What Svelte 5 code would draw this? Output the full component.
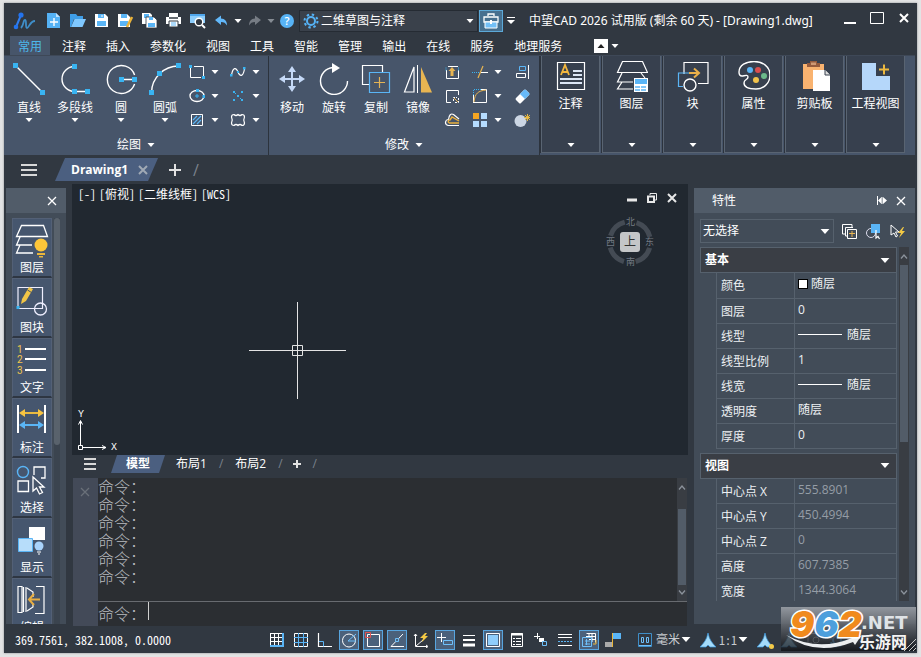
<script>
  const icons = {
    logo: '<path d="M3 16 8 4" stroke="#2f7df0" stroke-width="2"/><circle cx="8" cy="4" r="2.6" fill="#2373ee"/><circle cx="3" cy="16" r="2.3" fill="#2373ee"/><path d="M8 17C11 14 10 9 12 9S12 17 14 17 17 10 22 10" fill="none" stroke="#3f8ec8" stroke-width="1.8"/>',
    new: '<path d="M2 1h9l4 4v11H2z" fill="#55b2f5"/><path d="M11 1v4h4z" fill="#bfe3ff"/><path d="M5 10h8M9 6v8" stroke="#fff" stroke-width="1.4"/>',
    open: '<path d="M1 15V2h6l1.500 2H14v3H5L2 15z" fill="#3f9ee8"/><path d="M5.500 7H17l-3.500 8H2z" fill="#7fc8ff"/>',
    save: '<path d="M2 2h10l3 3v10H2z" fill="#fff"/><path d="M5 2h6v4H5zM4 9h9v5H4z" fill="#5ab5f6"/><path d="M9 3v2" stroke="#fff"/>',
    saveas: '<path d="M1 2h9l3 3v10H1z" fill="#fff"/><path d="M4 2h6v4H4zM3 9h8v5H3z" fill="#5ab5f6"/><path d="m15 5-5 10" stroke="#e8b23a" stroke-width="2.600"/>',
    saveall: '<path d="M1 1h8l2 2v9H1z" fill="#fff"/><path d="M3 2h5v4H3z" fill="#5ab5f6"/><path d="M5 5h8l3 3v8H5z" fill="#fff" stroke="#313841" stroke-width=".8"/><path d="M8 5h4v3H8zM7 11h7v4H7z" fill="#5ab5f6"/>',
    print: '<path d="M4 1h9v4H4z" fill="#fff"/><path d="M1 5h15v7H1z" fill="#fff"/><path d="M4 6h9" stroke="#313841" stroke-width="1.500"/><path d="M4 9h9v6H4z" fill="#fff" stroke="#313841"/><path d="M6 11h5M6 13h5" stroke="#5ab5f6"/>',
    preview: '<path d="M1 2h15v9H1z" fill="#8ccdfc"/><path d="M1 2h15v2H1z" fill="#4fa6ec"/><circle cx="10" cy="10" r="3.800" fill="#313841" stroke="#fff" stroke-width="1.400"/><path d="m13 13 3 3" stroke="#fff" stroke-width="2"/>',
    undo: '<path d="M2 8 8 3.500v3c4 0 6 3 6 7-1.500-2.500-3-3.500-6-3.500V13z" fill="#62b8fa"/>',
    redo: '<path d="M15 8 9 3.500v3c-4 0-6 3-6 7 1.500-2.500 3-3.500 6-3.500V13z" fill="#767c84"/>',
    gear: '<circle cx="8" cy="8" r="4" fill="none" stroke="#55b2f5" stroke-width="2"/><circle cx="8" cy="8" r="6.500" fill="none" stroke="#55b2f5" stroke-width="2" stroke-dasharray="2.400 2.700"/>',
    toolbox: '<path d="M6 4V2h6v2M2 5h14v5H2z" fill="none" stroke="#fff" stroke-width="1.300"/><path d="M3 10h12v6H3z" fill="#73c0f7" stroke="#fff"/><path d="M9 8v4" stroke="#fff" stroke-width="2"/>',
    line: '<path d="m3 3 27 27" stroke="#fff" stroke-width="1.400"/><path d="M0 0h5v5H0zM27 27h5v5h-5z" fill="#39b4f2"/>',
    pline: '<path d="M15.500 3.500a12.500 12.500 0 0 0 0 25h13" fill="none" stroke="#fff" stroke-width="1.400"/><path d="M13 1h5v5h-5zM13 26h5v5h-5zM26 26h5v5h-5z" fill="#39b4f2"/>',
    circle: '<path d="M29.600 12a14 14 0 1 0 0 9M16.500 16.500h13" fill="none" stroke="#fff" stroke-width="1.400"/><path d="M14 14h5v5h-5zM27 14h5v5h-5z" fill="#39b4f2"/>',
    arc: '<path d="M2.500 29.500A27 27 0 0 1 29.500 3" fill="none" stroke="#fff" stroke-width="1.400"/><path d="M0 27h5v5H0zM8 8h5v5H8zM27 0h5v5h-5z" fill="#39b4f2"/>',
    rect: '<path d="M1.500 4v9.500H12M5 2.500h9.500V12" fill="none" stroke="#fff"/><path d="M0 1h3v3H0zM13 12h3v3h-3z" fill="#39b4f2"/>',
    ellipse: '<ellipse cx="8" cy="8" rx="7" ry="5.500" fill="none" stroke="#fff" stroke-width="1.300"/><path d="M7 1h3v3H7zM13.500 7h2.500v3h-2.500zM7.500 6h1v1.500H10v1H8.500V10h-1V8.500H6v-1h1.500z" fill="#39b4f2"/>',
    hatch: '<path d="M2.500 2.500h11v11h-11z" fill="none" stroke="#fff"/><path d="m4 8 4-4M4 12l8-8M8 12l4-4" stroke="#5ab5f6" stroke-width="1.200"/>',
    spline: '<path d="M1.500 11C3 3 6 3 8 8s5 5 6.500-3" fill="none" stroke="#fff" stroke-width="1.200"/><path d="M0 10h2.500v2.500H0zM7 7h2v2H7zM13 3h2.500v2.500H13z" fill="#39b4f2"/>',
    points: '<path d="M3 3h2v2H3zM11 3h2v2h-2zM7 7h2v2H7zM3 11h2v2H3zM11 11h2v2h-2zM5 5h1v1H5zM10 10h1v1h-1z" fill="#39b4f2"/>',
    cloud: '<path d="M4 2.500q2 2 4 0 2 2 4 0 2.500 0 2.500 2.500-1.500 3 0 6 0 2.500-2.500 2.500-2-2-4 0-2-2-4 0-2.500 0-2.500-2.500 1.500-3 0-6 0-2.500 2.500-2.500z" fill="none" stroke="#fff" stroke-width="1.200"/>',
    move: '<path d="M16 6v20M6 16h20" stroke="#c5d9f7" stroke-width="2"/><path d="m16 3 4 6h-8zM16 29l4-6h-8zM3 16l6-4v8zM29 16l-6-4v8z" fill="#c5d9f7"/>',
    rotate: '<path d="M29.500 18A13.500 13.500 0 1 1 15 4.500" fill="none" stroke="#fff" stroke-width="1.400"/><path d="m14 0 8 5-8 5z" fill="#fff"/>',
    copy: '<path d="M9 21.500H2.500v-19h20V9" fill="none" stroke="#fff" stroke-width="1.200"/><path d="M9.500 9.500h20v20h-20z" fill="none" stroke="#5ab5f6" stroke-width="1.200"/><path d="M14 19.500h11M19.500 14v11" stroke="#e5b354" stroke-width="1.200"/>',
    mirror: '<path d="M2.500 29h9.500V4z" fill="none" stroke="#fff" stroke-width="1.200"/><path d="M15.500 2v28" stroke="#fff"/><path d="M19 4v25.500h11z" fill="#e8b552"/>',
    stretch: '<path d="M4 2.500h10M2.500 6v8.500h12V6" fill="none" stroke="#fff"/><path d="M2 3.500v3M14.500 3.500v3" stroke="#39b4f2" stroke-dasharray="1 1"/><path d="m8 3 3.500 4H9.500v5h-3V7h-2z" fill="#e8b552"/>',
    scale: '<path d="M7 14.500H2.500v-12h12V7" fill="none" stroke="#fff"/><path d="M9.500 13V9.500H13M14.500 10v4.500H10" fill="none" stroke="#fff" stroke-dasharray="2 1"/><path d="m10 10 4 4" stroke="#e8b552"/>',
    offset: '<path d="M15 13.500H4.500a3 3 0 0 1 0-6C5 3 7 1 9.500 2.500L15 7" fill="none" stroke="#fff" stroke-width="1.200"/><path d="M15 11H5.500a1 1 0 0 1 .5-3l2-3 7 4" fill="none" stroke="#eab13f" stroke-width="1.400"/>',
    trim: '<path d="M0 8.500h8" stroke="#39b4f2" stroke-dasharray="1 1"/><path d="M9 8.500h7" stroke="#fff"/><path d="m11 2-5 12" stroke="#e8b552" stroke-width="1.200"/>',
    fillet: '<path d="M1.500 15V7M9 1.500h5.500v13H1.500" fill="none" stroke="#fff"/><path d="M1.500 7V1.500H9" fill="none" stroke="#39b4f2" stroke-dasharray="1 1"/><path d="M2 14C3 5 6 3 14 2" fill="none" stroke="#e8b552"/>',
    array: '<path d="M1 1h6v6H1z" fill="#f5a623"/><path d="M9 1h6v6H9zM1 9h6v6H1zM9 9h6v6H9z" fill="#b5dcff"/>',
    align: '<path d="M14.500 1v14" stroke="#fff"/><path d="M5.500 2.500h6v4h-6z" fill="none" stroke="#5ab5f6"/><path d="M2.500 9.500h9v4h-9z" fill="none" stroke="#fff"/>',
    erase: '<path d="m2 10 8-8q1-1 2 0l3 3q1 1 0 2l-8 8q-1 1-2 0l-3-3q-1-1 0-2z" fill="#fff"/><path d="m6 6 4-4q1-1 2 0l3 3q1 1 0 2l-4 4z" fill="#67b9f8"/>',
    explode: '<circle cx="6.500" cy="9" r="6" fill="#ccd6e4"/><path d="M13.500 2v7M10 5.500h7M11 3l5 5M16 3l-5 5" stroke="#e8b83e"/>',
    note: '<path d="M2.500 1.500h27v27h-27z" fill="none" stroke="#fff" stroke-width="1.200"/><path d="m6 14 4-10 4 10M7.500 11h5" fill="none" stroke="#f3b73e" stroke-width="1.800"/><path d="M18 10h9M18 14h9M5 18h22M5 22h22" stroke="#dce6f5" stroke-width="1.800"/>',
    layers: '<path d="M6.500.5h20l5 11H1.500zM6 12l-4.500 9H17M6 21l-4.500 7H17M25 12l4 5" fill="none" stroke="#fff" stroke-width="1.200"/><path d="M18 17h14v14H18z" fill="#fff"/><path d="M19 18h12v5H19z" fill="#5ab5f6"/><path d="M19 26h12M19 29h12" stroke="#5ab5f6" stroke-width="1.500" stroke-dasharray="5 1"/>',
    block: '<path d="M7 8V1.500h24v21H21M7 13v-5" fill="none" stroke="#fff" stroke-width="1.200"/><path d="M14 12H1.500v13.500H6" fill="none" stroke="#5ab5f6" stroke-width="1.200"/><circle cx="13" cy="24" r="6" fill="#37404e" stroke="#fff" stroke-width="1.400"/><path d="M12 12h9M17 7.500l5 4.500-5 4.500" fill="none" stroke="#e9b04a" stroke-width="2"/>',
    palette: '<path d="M1 11C1 4 8 .5 16 .5S32 5 32 14 25 28 18 28 6 26 6 22s4-3 4-6-4-1-6-1-3-2-3-4z" fill="none" stroke="#fff" stroke-width="1.400"/><circle cx="12" cy="9" r="3" fill="#5ab5f6"/><circle cx="20" cy="9" r="3" fill="#db4e4e"/><circle cx="26" cy="15" r="3" fill="#6bb98a"/><circle cx="18" cy="19" r="3" fill="#f2c34c"/>',
    clipboard: '<path d="M4 3h21v25H4z" fill="#f9b370"/><path d="M8 2h3V0h7v2h3v4H8z" fill="#955b3d"/><path d="M12 1.500h5V4h-5z" fill="#cf9974"/><path d="M14 9h12l5 5v16H14z" fill="#fff"/><path d="M26 9v5h5" fill="#ddd" stroke="#37404e"/>',
    views: '<path d="M2 2h14v13h14v14H2z" fill="#b5d7fa"/><path d="M19 8.500h10M24 3.500v10" stroke="#edb93f" stroke-width="2"/>',
    lLayer: '<path d="M6.500 1.500h22l4 11h-31zM5 13l-3.500 8H17M5 21l-3.500 8H18" fill="none" stroke="#fff" stroke-width="1.300"/><circle cx="26" cy="21" r="6.500" fill="#fdc639"/><path d="M22 29h8v2h-8zM24 32h4v1.500h-4z" fill="#e9b63b"/>',
    lBlock: '<path d="M3 3.500h24.500v21H3z" fill="none" stroke="#eef" stroke-width="1.200"/><circle cx="25.500" cy="25" r="6" fill="none" stroke="#eef" stroke-width="1.300"/><path d="M1.500 22h3v3h-3z" fill="#39b4f2"/><path d="M6 20 7 15 14 3l4 2-7 12z" fill="#f1c547"/><path d="m12.500 6 4 2.500" stroke="#475569"/>',
    lText: '<path d="M10 5h21M10 15h21M10 26h21" stroke="#fff" stroke-width="2"/><g fill="#f3c64b" font-family="Roboto, sans-serif" font-size="10"><text x="2" y="9">1</text><text x="2" y="19">2</text><text x="2" y="30">3</text></g>',
    lDim: '<path d="M3 1v28M30 1v28" stroke="#fff" stroke-width="2"/><path d="M8 9h17" stroke="#e8b941" stroke-width="2"/><path d="m4 9 6-4v8zM29 9l-6-4v8z" fill="#f7c341"/><path d="M8 21h17" stroke="#5ab5f6" stroke-width="2"/><path d="m4 21 6-4v8zM29 21l-6-4v8z" fill="#5ab5f6"/>',
    lSelect: '<circle cx="8" cy="8" r="5.500" fill="none" stroke="#5ab5f6" stroke-width="1.400"/><path d="M19 11V3h11v11h-4M3 17h10.500v10.500H3z" fill="none" stroke="#fff" stroke-width="1.300"/><path d="M18 13v14l3.500-3 3 6 3-1.500-3-5.500H29z" fill="#475569" stroke="#fff" stroke-width="1.300"/>',
    lShow: '<path d="M14 3h16v13H14z" fill="#fff"/><path d="M3.500 14.500h14v13h-14z" fill="#b7ddfa" stroke="#5ab5f6"/><circle cx="24" cy="22" r="4.500" fill="#a9d3fb"/><path d="M22 28h4M23 30h2" stroke="#fff"/>',
    lEdit: '<path d="M3 2.500h4v26H3zM8.500 3v25M11 3v25M12 4l6 4v5M12 27l6-4v-3M21 2.500h8v27h-9" fill="none" stroke="#fff" stroke-width="1.200"/><path d="M14 15.500h11M19 10l-5 5.500 5 5.500" fill="none" stroke="#e8ae42" stroke-width="2"/>',
    multi: '<path d="M4.500 11H1.500V1.500H11V4" fill="none" stroke="#fff"/><path d="M12 4.500h-7.500V13H7" fill="none" stroke="#fff"/><path d="M6.500 6.500h9v9h-9z" fill="none" stroke="#fff"/><path d="M8 10.500h6M11 8v6" stroke="#e8b552"/>',
    pick: '<circle cx="6" cy="10" r="4.500" fill="none" stroke="#dde" /><path d="M6 1h9v9H6z" fill="#5ab5f6"/><path d="M11 7v8l2-1.500 1.500 2.500" fill="none" stroke="#fff" stroke-width="1.200"/>',
    quick: '<path d="M2 2v10l3-2 2 4 1.500-1-2-4H10z" fill="none" stroke="#fff"/><path d="m14 4-5 6h3l-2 5 6-7h-3l2-4z" fill="#f3c944"/>',
    sGrid: '<path d="M1.500 1v13M5.500 1v13M9.500 1v13M1 1.500h12M1 5.500h12M1 9.500h12" stroke="#fff"/><path d="M14 1v14M1 14h14" stroke="#5ab5f6" stroke-width="2"/>',
    sSnap: '<path d="M1.500 1.500h13v13h-13z" fill="none" stroke="#fff"/><path d="M5.500 1v14M10.500 1v14M1 5.500h14M1 10.500h14" stroke="#5ab5f6"/>',
    sOrtho: '<path d="M1.500 1v13.500H15" fill="none" stroke="#fff" stroke-width="1.200"/><path d="M2 9.500h4.500v5" fill="none" stroke="#5ab5f6"/>',
    sPolar: '<circle cx="8" cy="8.500" r="6.500" fill="none" stroke="#fff"/><path d="m15 2-8 7h8" fill="none" stroke="#6fc0fa"/>',
    sOsnap: '<path d="M2.500 2.500h12v12h-12z" fill="none" stroke="#fff"/><path d="M.5.500h5v5h-5z" fill="none" stroke="#e05252"/>',
    sTrack: '<path d="m14 2-12 12.500h13" fill="none" stroke="#fff"/><path d="M6.500 6.500h3v3h-3z" fill="#47617f" stroke="#6fc0fa"/>',
    sUcs: '<path d="M2.500 2v12.500H14M3 14l7-6M1 4l1.500-2L4 4M13 13l2 1.500-2 1.500" fill="none" stroke="#fff"/><path d="m12 1-5 5h3l-1 4 6-6h-3l2-3z" fill="#f3c944"/>',
    sDyn: '<path d="M0 5.500h9M4.500 1v9" stroke="#fff"/><path d="M6.500 8.500h9v4h-9z" fill="none" stroke="#6fc0fa"/>',
    sLw: '<path d="M2 3.500h12" stroke="#fff"/><path d="M2 8h12" stroke="#fff" stroke-width="2"/><path d="M2 13h12" stroke="#fff" stroke-width="3"/>',
    sTrans: '<path d="M1.500 1.500h13v13h-13z" fill="none" stroke="#fff"/><path d="M3 3h10v10H3z" fill="#8fcdfb"/>',
    sQp: '<path d="M2.500 1.500h11v13h-11z" fill="none" stroke="#fff"/><path d="M2 2.500h12" stroke="#fff" stroke-width="2"/><path d="M4 6.500h2M7 6.500h5M4 9.500h2M7 9.500h5M4 12.500h2M7 12.500h5" stroke="#fff"/>',
    sSc: '<path d="M1 4.500h6M4.500 1v6" stroke="#fff"/><path d="M6 6h5v4H6z" fill="#fff"/><path d="M9.500 9.500h4v4h-4z" fill="#313841" stroke="#6fc0fa"/>',
    sLt: '<path d="M1 2.500h14M1 5.500h14M1 13.500h14" stroke="#fff"/><path d="M1 9.500h14" stroke="#5ab5f6" stroke-dasharray="2 1"/>',
    sModel: '<path d="M5.500 1.500h9v9M8 2v4M11 2v8M5 4.500h10M8 7.500h7" fill="none" stroke="#fff"/><path d="M1.500 5.500h9v9h-9zM4 9h5M4 12h5M5.500 7v6" fill="none" stroke="#6fc0fa"/><path d="M15 8v4h-3" fill="none" stroke="#e9b63b"/>',
    sClean: '<path d="M8 1h8v6H8z" fill="#5ab5f6"/><path d="M0 10h7v5H0z" fill="#aaa"/><path d="M7.500 1v14" stroke="#e9b63b"/>',
    sUnit: '<path d="M1.500 1.500h13v13h-13z" fill="none" stroke="#3f8ec8"/><path d="M4.500 5.500h2v5h-2zM9.500 5.500h2v5h-2zM2 13.500h12" fill="none" stroke="#6fc0fa"/>',
    sAnno: '<path d="M8 1q1 5 3 8t5 6H10l-2-2-2 2H0q3-3 5-6t3-8z" fill="#a5dcfa" stroke="#3d9be0" stroke-width=".7"/>',
    sIso: '<path d="M2 1.500h9M11 5a3 3 0 1 1 0 6 3 3 0 0 1 0-6M3 3v8h4" fill="none" stroke="#c7cbd0"/>'
  };
  const quick = [['new', '新建'], ['open', '打开'], ['save', '保存'], ['saveas', '另存为'], ['saveall', '全部保存'], ['print', '打印'], ['preview', '预览']];
  const tabs = ['常用', '注释', '插入', '参数化', '视图', '工具', '智能', '管理', '输出', '在线', '服务', '地理服务'];
  const draw = [['line', '直线'], ['pline', '多段线'], ['circle', '圆'], ['arc', '圆弧']];
  const drawSmall = [['rect', '矩形'], ['spline', '样条曲线'], ['ellipse', '椭圆'], ['points', '点'], ['hatch', '填充'], ['cloud', '修订云线']];
  const modify = [['move', '移动'], ['rotate', '旋转'], ['copy', '复制'], ['mirror', '镜像']];
  const modSmall = [['stretch', '拉伸'], ['trim', '修剪', 1], ['align', '对齐'], ['scale', '缩放'], ['fillet', '圆角', 1], ['erase', '删除'], ['offset', '偏移'], ['array', '阵列', 1], ['explode', '分解']];
  const panels = [['note', '注释'], ['layers', '图层'], ['block', '块'], ['palette', '属性'], ['clipboard', '剪贴板'], ['views', '工程视图']];
  const dock = [['lLayer', '图层'], ['lBlock', '图块'], ['lText', '文字'], ['lDim', '标注'], ['lSelect', '选择'], ['lShow', '显示'], ['lEdit', '编辑']];
  const groups = [
    { name: '基本', dim: false, rows: [['颜色', '随层', 'swatch'], ['图层', '0'], ['线型', '随层', 'rule'], ['线型比例', '1'], ['线宽', '随层', 'rule'], ['透明度', '随层'], ['厚度', '0']] },
    { name: '视图', dim: true, rows: [['中心点 X', '555.8901'], ['中心点 Y', '450.4994'], ['中心点 Z', '0'], ['高度', '607.7385'], ['宽度', '1344.3064']] }
  ];
  const toggles = [['sGrid', '栅格'], ['sSnap', '捕捉'], ['sOrtho', '正交'], ['sPolar', '极轴', 1], ['sOsnap', '对象捕捉', 1], ['sTrack', '对象追踪', 1], ['sUcs', '动态UCS'], ['sDyn', '动态输入', 1], ['sLw', '线宽'], ['sTrans', '透明度', 1], ['sQp', '快捷特性'], ['sSc', '选择循环'], ['sLt', '线型'], ['sModel', '模型', 1], ['sClean', '全屏']];
</script>

{#snippet icon(name, size)}
  <svg width={size} height={size} viewBox="0 0 {size} {size}" aria-hidden="true">{@html icons[name]}</svg>
{/snippet}
{#snippet tri()}
  <svg class="tri" width="8" height="4" viewBox="0 0 8 4" aria-hidden="true"><path d="M.5 0h7L4 4z" fill="currentColor" /></svg>
{/snippet}
{#snippet burger(w)}
  <svg width={w} height="12" viewBox="0 0 16 12" preserveAspectRatio="none" aria-hidden="true"><path d="M0 1h16M0 6h16M0 11h16" stroke="#d8d8d8" stroke-width="2" /></svg>
{/snippet}
{#snippet cross(c, w)}
  <svg width="10" height="10" viewBox="0 0 10 10" aria-hidden="true"><path d="m1 1 8 8M9 1 1 9" stroke={c} stroke-width={w} /></svg>
{/snippet}

<div class="page">
  <div class="window">
    <header class="title">
      <span class="logo"><svg width="24" height="20" viewBox="0 0 24 20" aria-hidden="true">{@html icons.logo}</svg></span>
      {#each quick as [i, l]}<button class="qb" aria-label={l}>{@render icon(i, 17)}</button>{/each}
      <button class="qb" aria-label="撤销">{@render icon('undo', 17)}</button>
      <button class="qa" aria-label="撤销列表">{@render tri()}</button>
      <button class="qb" aria-label="重做">{@render icon('redo', 17)}</button>
      <button class="qa off" aria-label="重做列表">{@render tri()}</button>
      <button class="qb" aria-label="帮助"><span class="help">?</span></button>
      <span class="combo ws">
        <span class="lead">{@render icon('gear', 16)}</span>
        <select aria-label="工作空间"><option>二维草图与注释</option></select>
        {@render tri()}
      </span>
      <button class="toolbox" aria-label="工具箱">{@render icon('toolbox', 18)}</button>
      <button class="more" aria-label="自定义"><svg width="8" height="8" viewBox="0 0 8 8"><path d="M0 .5h8" stroke="#fff" /><path d="M0 3h8L4 7z" fill="#fff" /></svg></button>
      <h1>中望CAD 2026 试用版 (剩余 60 天) - [Drawing1.dwg]</h1>
      <div class="wc">
        <button aria-label="最小化"><svg width="14" height="14" viewBox="0 0 14 14"><path d="M1 12h12" stroke="#fff" stroke-width="2" /></svg></button>
        <button aria-label="最大化"><svg width="14" height="14" viewBox="0 0 14 14"><path d="M.5 1.500h13v11H.5z" fill="none" stroke="#fff" /></svg></button>
        <button aria-label="关闭">{@render cross('#fff', 2)}</button>
      </div>
    </header>

    <nav class="tabs">
      {#each tabs as t, i}<button class:on={i === 0}>{t}</button>{/each}
      <button class="fold" aria-label="折叠功能区"><span>{@render tri()}</span>{@render tri()}</button>
    </nav>

    <div class="ribbon">
      <section class="panel">
        <div class="tools wide">
          {#each draw as [i, l]}<button class="big">{@render icon(i, 32)}<span>{l}</span>{@render tri()}</button>{/each}
          <div class="small two">
            {#each drawSmall as [i, l]}<button aria-label={l}>{@render icon(i, 16)}{@render tri()}</button>{/each}
          </div>
        </div>
        <button class="foot">绘图 {@render tri()}</button>
      </section>
      <section class="panel">
        <div class="tools">
          {#each modify as [i, l]}<button class="big">{@render icon(i, 32)}<span>{l}</span></button>{/each}
          <div class="small three">
            {#each modSmall as [i, l, a]}<button aria-label={l}>{@render icon(i, 16)}{#if a}{@render tri()}{/if}</button>{/each}
          </div>
        </div>
        <button class="foot">修改 {@render tri()}</button>
      </section>
      <div class="closed">
        {#each panels as [i, l]}<button>{@render icon(i, 32)}<span>{l}</span>{@render tri()}</button>{/each}
      </div>
    </div>

    <div class="docs">
      <button class="menu" aria-label="文档列表">{@render burger(16)}</button>
      <div class="doc"><strong>Drawing1</strong><button aria-label="关闭文档">{@render cross('#a0a9b5', 2)}</button></div>
      <button class="add" aria-label="新建文档"><svg width="12" height="12" viewBox="0 0 12 12"><path d="M6 0v12M0 6h12" stroke="#e2e2e2" stroke-width="2" /></svg></button>
      <i>/</i>
    </div>

    <div class="work">
      <aside class="dock left">
        <div class="head"><button aria-label="关闭工具板">{@render cross('#fff', 1.3)}</button></div>
        <div class="rail">
          <div class="items">
            {#each dock as [i, l]}<button>{@render icon(i, 34)}<span>{l}</span></button>{/each}
          </div>
          <div class="track"><b></b></div>
        </div>
      </aside>

      <main>
        <div class="canvas">
          <div class="vp"><button>[-]</button><button>[俯视]</button><button>[二维线框]</button><button>[WCS]</button></div>
          <div class="mdi">
            <button aria-label="最小化视口"><svg width="10" height="10" viewBox="0 0 10 10"><path d="M0 7h10" stroke="#e8e8e8" stroke-width="3" /></svg></button>
            <button aria-label="还原视口"><svg width="10" height="10" viewBox="0 0 10 10"><path d="M3 2V.5h6.500v6.500H8" fill="none" stroke="#e8e8e8" /><path d="M1 3.500h6v5.500H1z" fill="none" stroke="#e8e8e8" stroke-width="2" /></svg></button>
            <button aria-label="关闭视口">{@render cross('#e8e8e8', 2)}</button>
          </div>
          <div class="cube">
            <svg width="48" height="50" viewBox="0 0 48 50" aria-hidden="true"><circle cx="24" cy="25" r="20.500" fill="none" stroke="#444b54" stroke-width="5" stroke-dasharray="20.200 12" stroke-dashoffset="-6" /></svg>
            <span class="n">北</span><span class="w">西</span><span class="up">上</span><span class="e">东</span><span class="s">南</span>
          </div>
          <svg class="cursor" width="97" height="97" viewBox="0 0 97 97" aria-hidden="true"><path d="M48.500 0v97M0 48.500h97M43.500 43.500h10v10h-10z" fill="none" stroke="#e4e4e4" /></svg>
          <div class="ucs">
            <svg width="32" height="31" viewBox="0 0 32 31" aria-hidden="true"><path d="M4.500 2v24M7 28.500h23M2.500 26.500h4v4h-4zM2.500 5.500l2-4 2 4M26 26.500l4 2-4 2" fill="none" stroke="#fff" /></svg>
            <span class="y">Y</span><span class="x">X</span>
          </div>
        </div>
        <div class="layouts">
          <button class="menu" aria-label="布局列表">{@render burger(12)}</button>
          <button class="sheet on">模型</button>
          <button class="sheet">布局1</button><i>/</i>
          <button class="sheet">布局2</button><i>/</i>
          <button class="add" aria-label="新建布局"><svg width="8" height="8" viewBox="0 0 8 8"><path d="M4 0v8M0 4h8" stroke="#e2e2e2" stroke-width="2" /></svg></button><i>/</i>
        </div>
        <div class="cmd">
          <div class="gutter"><button aria-label="关闭命令行">{@render cross('#6a7079', 1.3)}</button></div>
          <div class="console">
            <div class="hist">
              <div class="log">{#each Array(6) as _}<p>命令：</p>{/each}</div>
              <div class="vbar">
                <svg width="8" height="5" viewBox="0 0 8 5"><path d="m1 4.500 3-3.500 3 3.500" fill="none" stroke="#8b929b" stroke-width="1.300" /></svg>
                <b></b>
                <svg width="8" height="5" viewBox="0 0 8 5"><path d="m1 .5 3 3.500 3-3.500" fill="none" stroke="#8b929b" stroke-width="1.300" /></svg>
              </div>
            </div>
            <div class="entry"><label for="cmd">命令：</label><span class="caret"></span><input id="cmd" autocomplete="off" /></div>
          </div>
        </div>
      </main>

      <aside class="dock props">
        <div class="head"><h2>特性</h2>
          <button aria-label="自动隐藏"><svg width="10" height="9" viewBox="0 0 10 9"><path d="M.5 0v9M5 1v7" stroke="#fff" /><path d="M4.500 1v7L1 4.500zM6 1v7l4-3.500z" fill="#fff" /></svg></button>
          <button aria-label="关闭特性">{@render cross('#fff', 1.3)}</button>
        </div>
        <div class="pick">
          <span class="combo"><select aria-label="选择集"><option>无选择</option></select>{@render tri()}</span>
          <button aria-label="切换PICKADD">{@render icon('multi', 17)}</button>
          <button aria-label="选择对象">{@render icon('pick', 17)}</button>
          <button aria-label="快速选择">{@render icon('quick', 17)}</button>
        </div>
        <div class="sheetbox">
          <div class="cats">
            {#each groups as g}
              <section>
                <button class="cat">{g.name}{@render tri()}</button>
                <table class:dim={g.dim}>
                  <tbody>
                    {#each g.rows as [k, v, m]}
                      <tr><th scope="row">{k}</th><td>{#if m}<span class={m}></span>{/if}{v}</td></tr>
                    {/each}
                  </tbody>
                </table>
              </section>
            {/each}
          </div>
          <div class="vbar">
            <svg width="8" height="5" viewBox="0 0 8 5"><path d="m1 4.500 3-3.500 3 3.500" fill="none" stroke="#8b929b" stroke-width="1.300" /></svg>
            <b></b>
            <svg width="8" height="5" viewBox="0 0 8 5"><path d="m1 .5 3 3.500 3-3.500" fill="none" stroke="#8b929b" stroke-width="1.300" /></svg>
          </div>
        </div>
      </aside>
    </div>

    <footer class="status">
      <output>369.7561, 382.1008, 0.0000</output>
      {#each toggles as [i, l, on]}<button class="tg" class:on={on} aria-label={l}>{@render icon(i, 16)}</button>{/each}
      <button class="unit">{@render icon('sUnit', 16)}毫米{@render tri()}</button>
      <button class="unit scale">{@render icon('sAnno', 16)}<span>1:1</span>{@render tri()}</button>
      <button class="tg lamp" aria-label="注释可见性">{@render icon('sAnno', 16)}</button>
      <button class="tg" aria-label="自动缩放">{@render icon('sAnno', 16)}</button>
      <button class="tg" aria-label="隔离对象">{@render icon('sIso', 16)}</button>
      <button class="tg" aria-label="设置">{@render icon('gear', 16)}</button>
    </footer>
  </div>

  <div class="mark">
    <svg viewBox="0 0 135 44" width="135" height="44" aria-hidden="true">
      <path d="M5 28q32 17 66 3l-1-3 10 1-6 9-2-3Q34 50 5 28z" fill="#eceef0" />
      <path d="m123 44 12-12M128 44l7-7M132 44l3-3" stroke="#c9c9c9" />
    </svg>
    <span class="num"><em>9</em><em class="b">6</em><em>2</em></span>
    <span class="net">.NET</span>
    <span class="cn">乐游网</span>
  </div>
</div>

<style>
  :global(body) { margin: 0; }
  * { box-sizing: border-box; }
  .page {
    position: relative; height: 100vh; min-height: 560px; padding: 3px 4px 4px; background: #e2e3e4;
    font: 12px/16px 'Open Sans', 'Noto Sans CJK SC', sans-serif; color: #fff;
  }
  .window { display: flex; flex-direction: column; height: 100%; background: #313841; box-shadow: 0 0 2px #8a8d92; }
  button, select, input { font: inherit; color: inherit; background: none; border: 0; padding: 0; margin: 0; outline: 0; }
  svg { display: block; flex: none; }
  h1, h2, p { margin: 0; font: inherit; }
  i { font-style: normal; color: #7b828c; }

  .title { display: flex; align-items: center; height: 33px; flex: none; padding-top: 2px; }
  .logo { width: 37px; padding-left: 9px; }
  .qb { width: 24px; display: grid; place-items: center; flex: none; }
  .qa { width: 9px; display: grid; place-items: center; flex: none; }
  .qa.off { color: #868c94; }
  .help { width: 14px; height: 14px; border-radius: 50%; background: #57b3f6; font-size: 11px; line-height: 14px; font-weight: 600; }
  .combo { display: flex; align-items: center; }
  .combo select { appearance: none; flex: 1; min-width: 0; }
  .ws { width: 179px; height: 22px; flex: none; background: #3a414b; border: 1px solid #252b33; padding: 0 3px; gap: 2px; }
  .toolbox { width: 24px; height: 22px; margin-left: 1px; flex: none; border: 1px solid #5ca9d8; background: #47708f; display: grid; place-items: center; }
  .more { width: 16px; margin-right: 10px; flex: none; display: grid; place-items: center; }
  .title h1 { flex: 1; white-space: nowrap; font-family: 'Noto Sans', 'Noto Sans CJK SC', sans-serif; }
  .wc { display: flex; gap: 2px; padding: 0 1px 6px 0; }
  .wc button { width: 25px; display: grid; place-items: center; }

  .tabs { display: flex; height: 19px; flex: none; padding-left: 4px; }
  .tabs button { padding: 2px 8px 0; margin: 0 2px; white-space: nowrap; }
  .tabs .on { background: #47556a; color: #4db8ea; }
  .tabs .fold { display: flex; align-items: center; gap: 3px; padding: 0; margin-left: 22px; }
  .fold span { background: #fff; color: #222; width: 14px; height: 14px; display: grid; place-items: center; }
  .fold span :global(svg) { transform: rotate(180deg); }

  .ribbon { display: flex; height: 100px; flex: none; background: #47556a; margin-right: 2px; border-top: 1px solid #3e4857; }
  .panel { display: flex; flex-direction: column; border-right: 1px solid #2c333d; }
  .tools { display: flex; flex: 1; padding: 7px 9px 0 2px; }
  .tools.wide { padding: 7px 8px 0 3px; }
  .big { display: flex; flex-direction: column; align-items: center; min-width: 42px; padding: 0 5px; white-space: nowrap; }
  .wide .big { min-width: 44px; padding: 0 6px; }
  .big span { margin: 5px 0 2px; }
  .small { display: grid; grid-auto-rows: 16px; row-gap: 8px; padding-top: 1px; }
  .small button { display: flex; align-items: center; gap: 6px; }
  .small.two { grid-template-columns: 41px 30px; padding-left: 2px; }
  .small.three { grid-template-columns: 28px 42px 16px; padding-left: 5px; }
  .foot { display: flex; align-items: center; justify-content: center; gap: 6px; height: 20px; }
  .closed { display: flex; gap: 2px; padding: 0 0 2px 1px; }
  .closed button { width: 59px; display: flex; flex-direction: column; align-items: center; padding: 5px 0; background: #37404e; border: 1px solid #596472; border-top: 0; box-shadow: -1px 0 #2c333d; white-space: nowrap; }
  .closed span { flex: 1; padding-top: 3px; }

  .docs { display: flex; align-items: center; height: 29px; flex: none; padding-left: 17px; }
  .doc { display: flex; align-items: center; gap: 10px; height: 23px; margin-left: 18px; padding: 0 10px 0 16px; background: #4b5f80; clip-path: polygon(10px 0, 100% 0, calc(100% - 10px) 100%, 0 100%); }
  .docs .add { margin: 0 12px 0 11px; }
  .docs i { font-size: 16px; }

  .work { display: flex; flex: 1; min-height: 0; gap: 6px; padding: 0 2px; }
  .dock { display: flex; flex-direction: column; flex: none; margin: 4px 0 2px; background: #424c58; }
  .head { display: flex; align-items: center; justify-content: flex-end; gap: 9px; height: 25px; flex: none; background: #515c69; padding-right: 9px; }
  .left { width: 60px; }
  .rail { display: flex; flex: 1; min-height: 0; gap: 2px; padding: 5px 6px 0; }
  .items { width: 40px; overflow: hidden; }
  .items button { display: flex; flex-direction: column; align-items: center; width: 100%; height: 60px; padding-top: 5px; background: #46566e; border: 1px solid #536076; border-bottom: 2px solid #2e3642; }
  .items span { margin-top: 2px; line-height: 16px; }
  .track { width: 6px; background: #3b444f; }
  .track b { display: block; height: 56%; background: #59626c; border-radius: 3px; }

  main { display: flex; flex-direction: column; flex: 1; min-width: 0; }
  .canvas { position: relative; flex: 1; min-height: 0; overflow: hidden; background: #212830; }
  .vp { display: flex; gap: 3px; padding: 2px 6px; font-family: 'Noto Sans Mono CJK SC', 'Liberation Mono', 'Noto Sans CJK SC', monospace; }
  .mdi { position: absolute; top: 9px; right: 11px; display: flex; gap: 10px; }
  .cube { position: absolute; top: 33px; right: 34px; width: 48px; height: 50px; font-size: 9px; line-height: 10px; color: #737a83; }
  .cube span { position: absolute; }
  .cube .n { left: 20px; top: 0; }
  .cube .s { left: 20px; bottom: 0; }
  .cube .w { left: 0; top: 20px; }
  .cube .e { right: 0; top: 20px; }
  .cube .up { left: 14px; top: 15px; width: 20px; height: 20px; border-radius: 3px; background: #c4c6c8; color: #333; font-size: 12px; line-height: 20px; text-align: center; }
  .cursor { position: absolute; left: 177px; top: 118px; }
  .ucs { position: absolute; left: 4px; bottom: 5px; font: 10px/10px 'Liberation Mono', monospace; }
  .ucs span { position: absolute; }
  .ucs .y { left: 2px; top: -9px; }
  .ucs .x { left: 35px; bottom: -3px; }

  .layouts { display: flex; align-items: center; height: 18px; margin-bottom: 5px; flex: none; padding-left: 12px; }
  .layouts .menu { margin-right: 15px; }
  .layouts i { padding: 0 1px; }
  .sheet { height: 18px; padding: 0 11px; white-space: nowrap; }
  .sheet.on { padding: 0 15px; font-weight: bold; background: #4b5f80; clip-path: polygon(6px 0, 100% 0, calc(100% - 6px) 100%, 0 100%); }
  .layouts .add { margin: 0 11px 0 9px; }

  .cmd { display: flex; flex: none; height: 148px; margin: 0 1px; background: #2b2e32; color: #b9bcc0; font-size: 16px; font-weight: 300; }
  .gutter { width: 25px; background: #434a58; padding: 5px 7px; }
  .console { flex: 1; display: flex; flex-direction: column; }
  .hist { display: flex; flex: 1; border-bottom: 1px solid #686b70; }
  .log { flex: 1; line-height: 18px; }
  .vbar { width: 10px; display: flex; flex-direction: column; align-items: center; padding: 7px 0 6px; background: #393d43; }
  .vbar b { width: 8px; flex: 1; background: #525c68; }
  .hist .vbar b { margin: 19px 0 5px; }
  .entry { display: flex; height: 24px; }
  .entry label { line-height: 24px; width: 50px; white-space: nowrap; }
  .caret { width: 1px; height: 18px; background: #d0d0d0; }
  .entry input { flex: 1; min-width: 0; }

  .props { width: 221px; }
  .props h2 { flex: 1; padding-left: 18px; }
  .props .combo :global(.tri), .cat :global(.tri) { width: 10px; height: 5px; }
  .pick { display: flex; align-items: center; gap: 7px; padding: 6px 9px 4px 6px; }
  .pick .combo { flex: 1; height: 24px; border: 1px solid #56616d; padding: 0 3px 0 2px; }
  .sheetbox { display: flex; flex: 1; min-height: 0; gap: 2px; padding: 0 6px 23px; }
  .cats { flex: 1; overflow: hidden; }
  .cats section { margin-bottom: 4px; }
  .cat { display: flex; align-items: center; justify-content: space-between; width: 100%; height: 26px; padding: 0 6px 0 4px; font-weight: bold; background: #3a3e45; border: 1px solid #56616d; }
  table { width: calc(100% - 16px); margin-left: 16px; border-collapse: collapse; table-layout: fixed; }
  tr { height: 25px; }
  th, td { height: 25px; padding: 0 4px; border: 1px solid #56616d; border-top: 0; text-align: left; font-weight: normal; white-space: nowrap; color: #edf0f3; }
  th { width: 78px; padding-top: 2px; }
  td { padding: 0 3px 2px; }
  .dim td { color: #959da6; }
  .swatch { display: inline-block; width: 10px; height: 10px; margin-right: 3px; vertical-align: -1px; background: #fff; border: 1px solid #000; }
  .rule { display: inline-block; width: 44px; height: 1px; margin-right: 5px; vertical-align: 4px; background: #fff; }
  .sheetbox .vbar b { flex: 0 0 52%; margin: 6px 0 auto; }

  .status { display: flex; align-items: center; height: 27px; flex: none; gap: 4px; padding: 0 0 0 11px; overflow: hidden; }
  output { width: 248px; flex: none; font-family: 'Noto Sans Mono CJK SC', 'Liberation Mono', monospace; white-space: pre; }
  .tg { width: 20px; height: 20px; flex: none; display: grid; place-items: center; border: 1px solid transparent; }
  .tg.on { background: #4b617b; border-color: #58a5df; }
  .unit { display: flex; align-items: center; gap: 3px; margin-left: 10px; flex: none; white-space: nowrap; color: #c7cbd0; }
  .unit :global(.tri) { width: 10px; height: 5px; color: #fff; margin-left: -2px; }
  .unit.scale { margin-left: 5px; }
  .unit span { font-family: 'Noto Sans Mono CJK SC', 'Liberation Mono', monospace; }
  .lamp { margin-left: 3px; grid-template: 1fr / 1fr; }
  .lamp::after { content: ''; grid-area: 1 / 1; align-self: end; justify-self: end; width: 5px; height: 5px; border-radius: 50%; background: #f4ca48; }
  .lamp :global(svg) { grid-area: 1 / 1; }

  .mark { position: absolute; right: 5px; bottom: 6px; width: 135px; height: 44px; overflow: hidden; background: linear-gradient(rgba(150, 155, 162, .95), rgba(80, 84, 90, .82) 55%, rgba(12, 14, 18, .75)); }
  .mark span { position: absolute; white-space: nowrap; }
  .num { left: 9px; top: 0; font: italic 900 36px/34px 'Inter', 'Roboto', sans-serif; }
  .num em { color: #f08a1d; -webkit-text-stroke: 3px #fff; paint-order: stroke fill; }
  .num .b { color: #4d9fdc; }
  .net { left: 80px; top: 6px; font: bold 18px/20px 'DejaVu Sans', sans-serif; color: #dfe3e6; }
  .cn { left: 78px; top: 25px; font: bold 16px/18px 'Noto Sans CJK SC', sans-serif; color: #f4f4f4; }
</style>
